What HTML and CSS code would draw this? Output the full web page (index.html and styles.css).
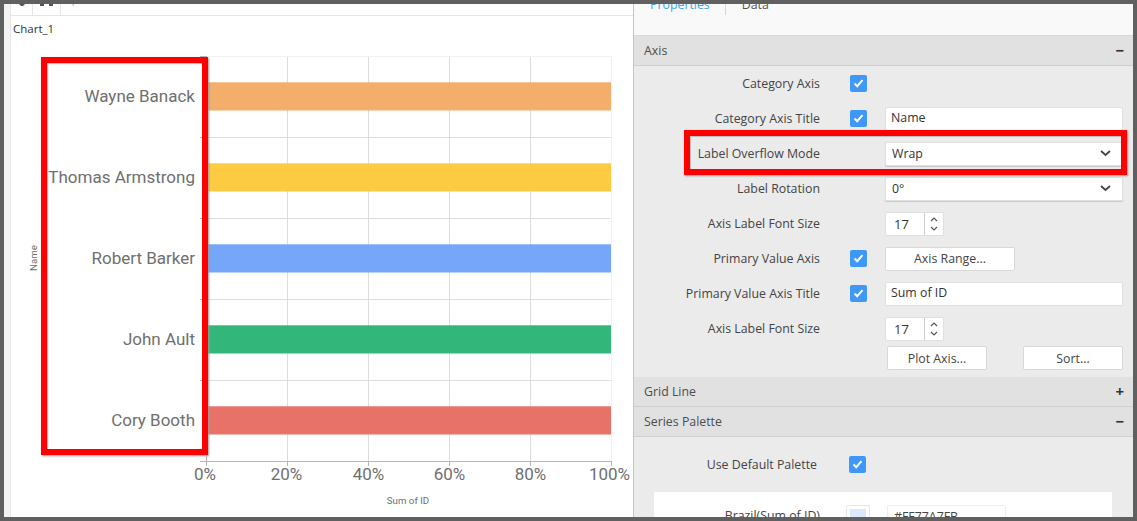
FILE: index.html
```html
<!DOCTYPE html>
<html lang="en">
<head>
    <meta charset="UTF-8">
    <title>Chart properties</title>
    <link rel="stylesheet" href="styles.css">
</head>
<body>
<div class="frame">
    <div class="designer">
        <div class="gutter"></div>
        <div class="chart_pane">
            <div class="toolbar">
                <div class="tool">
                    <svg width="10" height="2" viewBox="0 0 10 2"><path d="M2 0 H8 L6 2 H4 Z" fill="#555"/></svg>
                </div>
                <div class="tool tool_wide">
                    <svg width="13" height="2" viewBox="0 0 13 2"><path d="M0 0 H4 V2 H0 Z M9 0 H13 V2 H9 Z" fill="#555"/></svg>
                </div>
                <div class="tool tool_last">
                    <svg width="6" height="3" viewBox="0 0 6 3"><path d="M3 0 H5 V2 H4 Z" fill="#ccc"/></svg>
                </div>
            </div>
            <div class="chart_title">Chart_1</div>
            <svg class="chart" viewBox="11 42 622 475" width="622" height="475">
                <!-- grid -->
                <path class="grid_soft" d="M206.5 56.5 H611.5 V461"/>
                <path class="grid" d="M287.5 57 V461 M368.5 57 V461 M449.5 57 V461 M530.5 57 V461 M207 137.5 H611 M207 218.5 H611 M207 299.5 H611 M207 380.5 H611"/>
                <!-- bars -->
                <rect x="207" y="82.3" width="404" height="28.2" fill="#f3ae6c"/>
                <rect x="207" y="163.3" width="404" height="28.2" fill="#fdcb42"/>
                <rect x="207" y="244.3" width="404" height="28.2" fill="#75a6fa"/>
                <rect x="207" y="325.3" width="404" height="28.2" fill="#33b679"/>
                <rect x="207" y="406.3" width="404" height="28.2" fill="#e77368"/>
                <!-- axes -->
                <path class="axis" d="M206.5 56 V461.5 M200 461.5 H611.5 M200 56.5 H206 M200 137.5 H206 M200 218.5 H206 M200 299.5 H206 M200 380.5 H206 M206.5 461 V466 M287.5 461 V466 M368.5 461 V466 M449.5 461 V466 M530.5 461 V466 M611.5 461 V466"/>
                <!-- category labels -->
                <text class="cat_label" x="195" y="102">Wayne Banack</text>
                <text class="cat_label" x="195" y="183">Thomas Armstrong</text>
                <text class="cat_label" x="195" y="264">Robert Barker</text>
                <text class="cat_label" x="195" y="345">John Ault</text>
                <text class="cat_label" x="195" y="426">Cory Booth</text>
                <!-- value labels -->
                <text class="val_label" x="205" y="480">0%</text>
                <text class="val_label" x="286.5" y="480">20%</text>
                <text class="val_label" x="368.5" y="480">40%</text>
                <text class="val_label" x="449.5" y="480">60%</text>
                <text class="val_label" x="530.5" y="480">80%</text>
                <text class="val_label" x="609.5" y="480">100%</text>
                <text class="axis_title" x="408" y="504">Sum of ID</text>
                <text class="axis_title" transform="translate(37 258) rotate(-90)">Name</text>
            </svg>
        </div>

        <div class="panel">
            <div class="tabs">
                <span class="tab tab_on">Properties</span>
                <span class="tab">Data</span>
            </div>

            <div class="sec_head">Axis <span class="sec_sign">&minus;</span></div>
            <div class="sec_body">
                <div class="row">
                    <label class="lbl">Category Axis</label>
                    <span class="check"><svg width="11" height="9" viewBox="0 0 11 9"><path d="M1.5 4.5 L4.2 7.2 L9.5 1.2" fill="none" stroke="#fff" stroke-width="2"/></svg></span>
                </div>
                <div class="row">
                    <label class="lbl">Category Axis Title</label>
                    <span class="check"><svg width="11" height="9" viewBox="0 0 11 9"><path d="M1.5 4.5 L4.2 7.2 L9.5 1.2" fill="none" stroke="#fff" stroke-width="2"/></svg></span>
                    <input class="field" type="text" value="Name">
                </div>
                <div class="row">
                    <label class="lbl">Label Overflow Mode</label>
                    <div class="field select">Wrap
                        <svg width="11" height="7" viewBox="0 0 11 7"><path d="M1 1 L5.5 5 L10 1" fill="none" stroke="#444" stroke-width="1.8"/></svg>
                    </div>
                </div>
                <div class="row">
                    <label class="lbl">Label Rotation</label>
                    <div class="field select">0&deg;
                        <svg width="11" height="7" viewBox="0 0 11 7"><path d="M1 1 L5.5 5 L10 1" fill="none" stroke="#444" stroke-width="1.8"/></svg>
                    </div>
                </div>
                <div class="row">
                    <label class="lbl">Axis Label Font Size</label>
                    <div class="spinner">
                        <span class="spin_val">17</span>
                        <span class="spin_btns">
                            <svg width="8" height="5" viewBox="0 0 8 5"><path d="M1 4 L4 1 L7 4" fill="none" stroke="#555" stroke-width="1.2"/></svg>
                            <svg width="8" height="5" viewBox="0 0 8 5"><path d="M1 1 L4 4 L7 1" fill="none" stroke="#555" stroke-width="1.2"/></svg>
                        </span>
                    </div>
                </div>
                <div class="row">
                    <label class="lbl">Primary Value Axis</label>
                    <span class="check"><svg width="11" height="9" viewBox="0 0 11 9"><path d="M1.5 4.5 L4.2 7.2 L9.5 1.2" fill="none" stroke="#fff" stroke-width="2"/></svg></span>
                    <button class="btn btn_range">Axis Range...</button>
                </div>
                <div class="row">
                    <label class="lbl">Primary Value Axis Title</label>
                    <span class="check"><svg width="11" height="9" viewBox="0 0 11 9"><path d="M1.5 4.5 L4.2 7.2 L9.5 1.2" fill="none" stroke="#fff" stroke-width="2"/></svg></span>
                    <input class="field" type="text" value="Sum of ID">
                </div>
                <div class="row">
                    <label class="lbl">Axis Label Font Size</label>
                    <div class="spinner">
                        <span class="spin_val">17</span>
                        <span class="spin_btns">
                            <svg width="8" height="5" viewBox="0 0 8 5"><path d="M1 4 L4 1 L7 4" fill="none" stroke="#555" stroke-width="1.2"/></svg>
                            <svg width="8" height="5" viewBox="0 0 8 5"><path d="M1 1 L4 4 L7 1" fill="none" stroke="#555" stroke-width="1.2"/></svg>
                        </span>
                    </div>
                </div>
                <div class="btn_row">
                    <button class="btn btn_half">Plot Axis...</button>
                    <button class="btn btn_half">Sort...</button>
                </div>
            </div>

            <div class="sec_head">Grid Line <span class="sec_sign">+</span></div>
            <div class="sec_head">Series Palette <span class="sec_sign">&minus;</span></div>
            <div class="sec_body palette">
                <div class="row row_palette">
                    <label class="lbl">Use Default Palette</label>
                    <span class="check"><svg width="11" height="9" viewBox="0 0 11 9"><path d="M1.5 4.5 L4.2 7.2 L9.5 1.2" fill="none" stroke="#fff" stroke-width="2"/></svg></span>
                </div>
                <div class="card">
                    <label class="lbl card_lbl">Brazil(Sum of ID)</label>
                    <span class="swatch"><i></i></span>
                    <span class="hex">#FF77A7FB</span>
                </div>
            </div>
        </div>
    </div>

    <div class="mark mark_labels"></div>
    <div class="mark mark_mode"></div>
</div>
</body>
</html>
```

FILE: styles.css
```css
*{
    box-sizing: border-box;
}
html,body{
    margin: 0;
    height: 100%;
    overflow: hidden;
}
body{
    font-family: "Open Sans", "Liberation Sans", sans-serif;
    font-size: 12.35px;
    color: #444;
}
.frame{
    position: relative;
    height: 100vh;
    border: 4px solid #606060;
    overflow: hidden;
    background: #fff;
}
.designer{
    display: flex;
    height: 100%;
}
.gutter{
    width: 7px;
    flex: none;
    background: #f3f3f3;
    border-right: 1px solid #e6e6e6;
}

/* chart side */
.chart_pane{
    width: 622px;
    flex: none;
    display: flex;
    flex-direction: column;
    background: #fff;
}
.toolbar{
    height: 12px;
    flex: none;
    display: flex;
    border-bottom: 1px solid #e6e6e6;
}
.tool{
    width: 22px;
    height: 11px;
    border-right: 1px solid #e6e6e6;
    display: flex;
    justify-content: center;
    align-items: flex-start;
}
.tool svg{
    display: block;
}
.tool_wide{
    width: 28px;
}
.tool_last{
    border-right: 0;
}
.chart_title{
    height: 26px;
    flex: none;
    padding: 5px 0 0 2px;
    font-size: 11.5px;
    line-height: 16px;
    color: #333;
}
.chart{
    display: block;
    flex: none;
}
.chart text{
    font-family: Roboto, "Liberation Sans", sans-serif;
    fill: #6f6f6f;
}
.grid,.grid_soft,.axis{
    fill: none;
    stroke-width: 1;
}
.grid{
    stroke: #dedede;
}
.grid_soft{
    stroke: #f2f2f2;
}
.axis{
    stroke: #b5b5b5;
}
.chart .cat_label{
    font-size: 17px;
    text-anchor: end;
}
.chart .val_label{
    font-size: 17px;
    text-anchor: middle;
}
.chart .axis_title{
    font-size: 9.7px;
    text-anchor: middle;
}

/* properties side */
.panel{
    flex: 1;
    min-width: 0;
    background: #ebebeb;
    border-left: 1px solid #c4c4c4;
    overflow: hidden;
}
.tabs{
    height: 32px;
    display: flex;
    align-items: flex-start;
    background: #f9f9f9;
    overflow: hidden;
    border-bottom: 1px solid #d4d9dc;
}
.tab{
    height: 20px;
    margin-top: -9px;
    padding: 0 16px;
    line-height: 20px;
    color: #555;
}
.tab_on{
    padding-right: 15px;
    color: #3fa7e8;
    border-right: 1px solid #d8d8d8;
}
.sec_head{
    display: flex;
    justify-content: space-between;
    align-items: center;
    height: 30px;
    padding: 0 9px 1px 10px;
    background: #e1e1e1;
    border-bottom: 1px solid #d0d0d0;
    font-weight: 500;
    color: #4d4d4d;
}
.sec_sign{
    font-size: 15px;
    font-weight: 700;
    color: #333;
}
.sec_body{
    height: 311px;
}
.palette{
    height: 85px;
}
.row{
    display: flex;
    align-items: center;
    height: 35px;
}
.lbl{
    width: 186px;
    flex: none;
    text-align: right;
    white-space: nowrap;
    color: #444;
}
.check{
    width: 17px;
    height: 17px;
    flex: none;
    margin-left: 30px;
    border-radius: 2px;
    background: #3f97f6;
    display: flex;
    justify-content: center;
    align-items: center;
}
.check svg{
    display: block;
}
.field{
    width: 238px;
    height: 24px;
    flex: none;
    margin-left: 18px;
    padding: 0 5px 2px;
    font: inherit;
    color: #333;
    background: #fff;
    border: 1px solid #e0e0e0;
    border-radius: 2px;
    outline: none;
}
.lbl + .field{
    margin-left: 65px;
}
.select{
    display: flex;
    justify-content: space-between;
    align-items: center;
    padding: 0 11px 0 6px;
    box-shadow: 0 1px 1px #c8c8c8;
}
.spinner{
    width: 59px;
    height: 24px;
    flex: none;
    margin-left: 65px;
    display: flex;
    background: #fff;
    border: 1px solid #e0e0e0;
    border-radius: 2px;
}
.spin_val{
    width: 39px;
    padding-left: 8px;
    line-height: 23px;
    font-size: 13px;
    color: #333;
    border-right: 1px solid #ccc;
}
.spin_btns{
    flex: 1;
    display: flex;
    flex-direction: column;
    justify-content: space-around;
    align-items: center;
    padding: 2px 0;
}
.spin_btns svg{
    display: block;
}
.btn{
    height: 24px;
    padding: 0;
    font: inherit;
    color: #444;
    background: #fff;
    border: 1px solid #d8d8d8;
    border-radius: 2px;
}
.btn_range{
    width: 130px;
    margin-left: 18px;
}
.btn_row{
    display: flex;
    justify-content: space-between;
    padding: 0 10px 0 253px;
}
.btn_half{
    width: 100px;
}
.row_palette{
    height: 55px;
}
.row_palette .lbl{
    width: 183px;
}
.row_palette .check{
    margin-left: 32px;
}
.card{
    display: flex;
    align-items: flex-start;
    height: 60px;
    margin: 0 21px 0 20px;
    padding-top: 13px;
    background: #fff;
}
.card_lbl{
    width: 166px;
    line-height: 22px;
}
.swatch{
    width: 24px;
    height: 24px;
    flex: none;
    margin-left: 26px;
    padding: 3px;
    background: #fff;
    border: 1px solid #e6e6e6;
    border-radius: 2px;
}
.swatch i{
    display: block;
    height: 100%;
    background: #dbe7fb;
}
.hex{
    width: 119px;
    height: 24px;
    margin-left: 17px;
    padding-left: 6px;
    line-height: 22px;
    border: 1px solid #eee;
    border-radius: 2px;
}

/* red marks drawn over the screenshot */
.mark{
    position: absolute;
    border: 6px solid #f00;
    box-shadow: 1px 1px 2px #999, inset 1px 1px 1px #bbb;
}
.mark_labels{
    left: 37px;
    top: 53px;
    width: 167px;
    height: 398px;
}
.mark_mode{
    left: 680px;
    top: 126px;
    width: 443px;
    height: 45px;
}
```
